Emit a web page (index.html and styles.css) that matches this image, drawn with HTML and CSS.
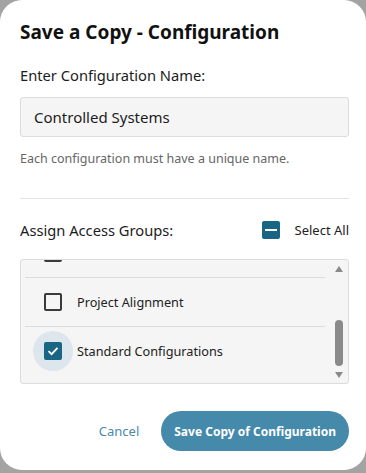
FILE: index.html
```html
<!DOCTYPE html>
<html lang="en">

<head>
    <meta charset="UTF-8">
    <meta name="viewport" content="width=device-width, initial-scale=1.0">
    <title>Save a Copy</title>
    <link rel="stylesheet" href="styles.css">
</head>

<body>
    <main class="dialog">
        <h1 class="dialog-title">Save a Copy - Configuration</h1>

        <label class="field-label" for="config-name">Enter Configuration Name:</label>
        <input class="name-input" type="text" id="config-name" value="Controlled Systems">
        <p class="hint">Each configuration must have a unique name.</p>

        <hr class="divider">

        <div class="groups-head">
            <span class="field-label">Assign Access Groups:</span>
            <span class="select-all">
                <span class="box box-partial"><span class="dash"></span></span>
                Select All
            </span>
        </div>

        <div class="group-list">
            <div class="group-items">
                <div class="group-row"><span class="box"></span></div>
                <div class="group-row"><span class="box"></span><span class="row-text">Project Alignment</span></div>
                <div class="group-row">
                    <span class="halo">
                        <span class="box box-checked">
                            <svg width="12" height="10" viewBox="0 0 12 10">
                                <path d="M1.5 5.2 L4.6 8.2 L10.5 1.8" fill="none" stroke="#fff" stroke-width="1.8" />
                            </svg>
                        </span>
                    </span>
                    <span class="row-text">Standard Configurations</span>
                </div>
            </div>
            <div class="scrollbar">
                <span class="arrow arrow-up"></span>
                <span class="track"><span class="thumb"></span></span>
                <span class="arrow arrow-down"></span>
            </div>
        </div>

        <div class="actions">
            <button class="btn-cancel">Cancel</button>
            <button class="btn-save">Save Copy of Configuration</button>
        </div>
    </main>
</body>

</html>
```

FILE: styles.css
```css
* {
    box-sizing: border-box;
}

body {
    margin: 0;
    padding: 0;
    background: #a3a3a3;
    font-family: "Noto Sans", "Liberation Sans", sans-serif;
    color: #1c1c1c;
}

.dialog {
    display: flex;
    flex-direction: column;
    width: 366px;
    height: 470px;
    background: #fff;
    border-radius: 22px;
    padding: 20px 17px 0 20px;
}

.dialog-title {
    margin: 0;
    font-size: 19px;
    font-weight: 700;
    line-height: 24px;
    color: #111;
}

.field-label {
    font-size: 14.7px;
    line-height: 20px;
}

label.field-label {
    margin-top: 21px;
}

.name-input {
    margin-top: 12px;
    height: 40px;
    width: 100%;
    border: 1px solid #dcdcdc;
    border-radius: 3px;
    background: #f5f5f5;
    padding: 0 13px;
    font-family: inherit;
    font-size: 15px;
    color: #1c1c1c;
}

.hint {
    margin: 14px 0 0;
    font-size: 12.5px;
    line-height: 16px;
    color: #666;
}

.divider {
    margin: 31px 0 0;
    border: 0;
    border-top: 1px solid #e2e2e2;
}

.groups-head {
    display: flex;
    justify-content: space-between;
    align-items: center;
    margin-top: 21px;
    height: 20px;
}

.select-all {
    display: flex;
    align-items: center;
    gap: 15px;
    font-size: 13px;
    color: #222;
}

.box {
    display: flex;
    align-items: center;
    justify-content: center;
    flex: none;
    width: 18px;
    height: 18px;
    border: 2px solid #3a3a3a;
    border-radius: 2px;
}

.box-partial,
.box-checked {
    background: #1b6584;
    border-color: #1b6584;
}

.dash {
    width: 12px;
    height: 2px;
    background: #fff;
}

.group-list {
    display: flex;
    margin-top: 19px;
    height: 125px;
    border: 1px solid #dcdcdc;
    border-radius: 3px;
    background: #f5f5f5;
}

.group-items {
    flex: 1;
    display: flex;
    flex-direction: column;
    justify-content: flex-end;
    overflow: hidden;
    padding: 0 0 8px 4px;
}

.group-row {
    flex: none;
    display: flex;
    align-items: center;
    gap: 15px;
    height: 49px;
    padding-left: 19px;
    border-top: 1px solid #dcdcdc;
    font-size: 12.7px;
    color: #222;
}

.group-row:first-child {
    border-top: 0;
}

.halo {
    display: flex;
    align-items: center;
    justify-content: center;
    width: 18px;
    height: 18px;
    position: relative;
}

.halo::before {
    content: "";
    position: absolute;
    left: -11px;
    top: -11px;
    width: 40px;
    height: 40px;
    border-radius: 50%;
    background: #dde6ec;
}

.halo .box {
    position: relative;
}

.scrollbar {
    flex: none;
    display: flex;
    flex-direction: column;
    align-items: center;
    width: 18px;
    padding: 6px 0 5px;
    margin-left: 5px;
}

.arrow {
    width: 0;
    height: 0;
    border-left: 4px solid transparent;
    border-right: 4px solid transparent;
}

.arrow-up {
    border-bottom: 6px solid #8a8a8a;
}

.arrow-down {
    border-top: 6px solid #8a8a8a;
}

.track {
    flex: 1;
    display: flex;
    flex-direction: column;
    justify-content: flex-end;
    padding: 4px 0 6px;
}

.thumb {
    width: 8px;
    height: 46px;
    border-radius: 4px;
    background: #8a8a8a;
}

.actions {
    display: flex;
    justify-content: flex-end;
    align-items: center;
    gap: 22px;
    margin-top: 27px;
}

.btn-cancel {
    border: 0;
    background: none;
    font-family: inherit;
    font-size: 13px;
    color: #4a89aa;
    padding: 0;
}

.btn-save {
    height: 40px;
    padding: 0 13px;
    border: 0;
    border-radius: 20px;
    background: #4589ab;
    color: #fff;
    font-family: inherit;
    font-size: 12px;
    font-weight: 700;
}
```
